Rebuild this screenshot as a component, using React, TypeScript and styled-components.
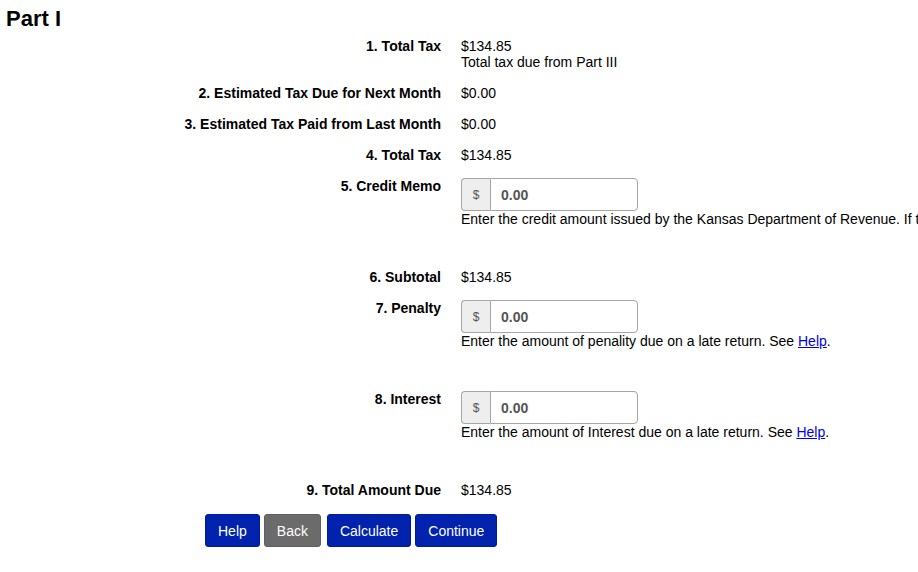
import React from "react";
import styled, { createGlobalStyle } from "styled-components";

const Global = createGlobalStyle`
  html, body { margin: 0; padding: 0; background: #fff; overflow: hidden; }
  body { font-family: "Liberation Sans", Arial, Helvetica, sans-serif; font-size: 14px; color: #000; }
`;

const Page = styled.div`
  width: 918px;
  height: 572px;
  overflow: hidden;
  padding: 0 0 0 6px;
  box-sizing: border-box;
`;

const Title = styled.h1`
  margin: 0;
  padding-top: 6px;
  font-size: 22px;
  line-height: 26px;
  font-weight: bold;
`;

const Form = styled.div`
  display: grid;
  grid-template-columns: 435px 1fr;
  column-gap: 20px;
  margin-top: 6px;
`;

const Label = styled.div<{ $tall?: boolean }>`
  text-align: right;
  font-weight: bold;
  line-height: 16px;
  padding-bottom: ${(p) => (p.$tall ? "42px" : "15px")};
  white-space: nowrap;
`;

const Value = styled.div<{ $tall?: boolean }>`
  line-height: 16px;
  padding-bottom: ${(p) => (p.$tall ? "42px" : "15px")};
  white-space: nowrap;
  min-width: 0;
`;

const InputGroup = styled.div`
  display: flex;
  width: 177px;
  height: 33px;
  box-sizing: border-box;
`;

const Addon = styled.span`
  display: flex;
  align-items: center;
  justify-content: center;
  width: 29px;
  box-sizing: border-box;
  background: #eeeeee;
  border: 1px solid #a6a6a6;
  border-right: none;
  border-radius: 4px 0 0 4px;
  color: #555;
  font-size: 12px;
`;

const Input = styled.input`
  flex: 1;
  min-width: 0;
  box-sizing: border-box;
  height: 33px;
  border: 1px solid #a6a6a6;
  border-radius: 0 4px 4px 0;
  padding: 1px 10px 0;
  font-family: "Liberation Sans", Arial, sans-serif;
  font-size: 14px;
  font-weight: bold;
  color: #555;
  outline: none;
  background: #fff;
`;

const Help = styled.div`
  line-height: 16px;
  white-space: nowrap;
`;

const Link = styled.a`
  color: #0000ee;
  text-decoration: underline;
`;

const Buttons = styled.div`
  display: flex;
  margin-left: 199px;
  margin-top: 1px;
`;

const Button = styled.button<{ $gray?: boolean; $ml?: number }>`
  height: 33px;
  box-sizing: border-box;
  padding: 0 12px;
  margin-left: ${(p) => p.$ml ?? 0}px;
  border: 1px solid ${(p) => (p.$gray ? "#5f5f5f" : "#001c9c")};
  border-radius: 3px;
  background: ${(p) => (p.$gray ? "#6b6b6b" : "#0022ad")};
  color: #fff;
  font-family: "Liberation Sans", Arial, sans-serif;
  font-size: 14px;
  cursor: pointer;
`;

function MoneyInput({ help }: { help: React.ReactNode }) {
  return (
    <>
      <InputGroup>
        <Addon>$</Addon>
        <Input defaultValue="0.00" />
      </InputGroup>
      <Help>{help}</Help>
    </>
  );
}

export default function App() {
  return (
    <Page>
      <Global />
      <Title>Part I</Title>
      <Form>
        <Label>1. Total Tax</Label>
        <Value>
          $134.85
          <br />
          Total tax due from Part III
        </Value>
        <Label>2. Estimated Tax Due for Next Month</Label>
        <Value>$0.00</Value>
        <Label>3. Estimated Tax Paid from Last Month</Label>
        <Value>$0.00</Value>
        <Label>4. Total Tax</Label>
        <Value>$134.85</Value>
        <Label $tall>5. Credit Memo</Label>
        <Value $tall>
          <MoneyInput help="Enter the credit amount issued by the Kansas Department of Revenue. If the credit memo is not applicable, leave this field as zero." />
        </Value>
        <Label>6. Subtotal</Label>
        <Value>$134.85</Value>
        <Label $tall>7. Penalty</Label>
        <Value $tall>
          <MoneyInput
            help={
              <>
                Enter the amount of penality due on a late return. See <Link href="#">Help</Link>.
              </>
            }
          />
        </Value>
        <Label $tall>8. Interest</Label>
        <Value $tall>
          <MoneyInput
            help={
              <>
                Enter the amount of Interest due on a late return. See <Link href="#">Help</Link>.
              </>
            }
          />
        </Value>
        <Label>9. Total Amount Due</Label>
        <Value>$134.85</Value>
      </Form>
      <Buttons>
        <Button>Help</Button>
        <Button $gray $ml={4}>Back</Button>
        <Button $ml={6}>Calculate</Button>
        <Button $ml={4}>Continue</Button>
      </Buttons>
    </Page>
  );
}
